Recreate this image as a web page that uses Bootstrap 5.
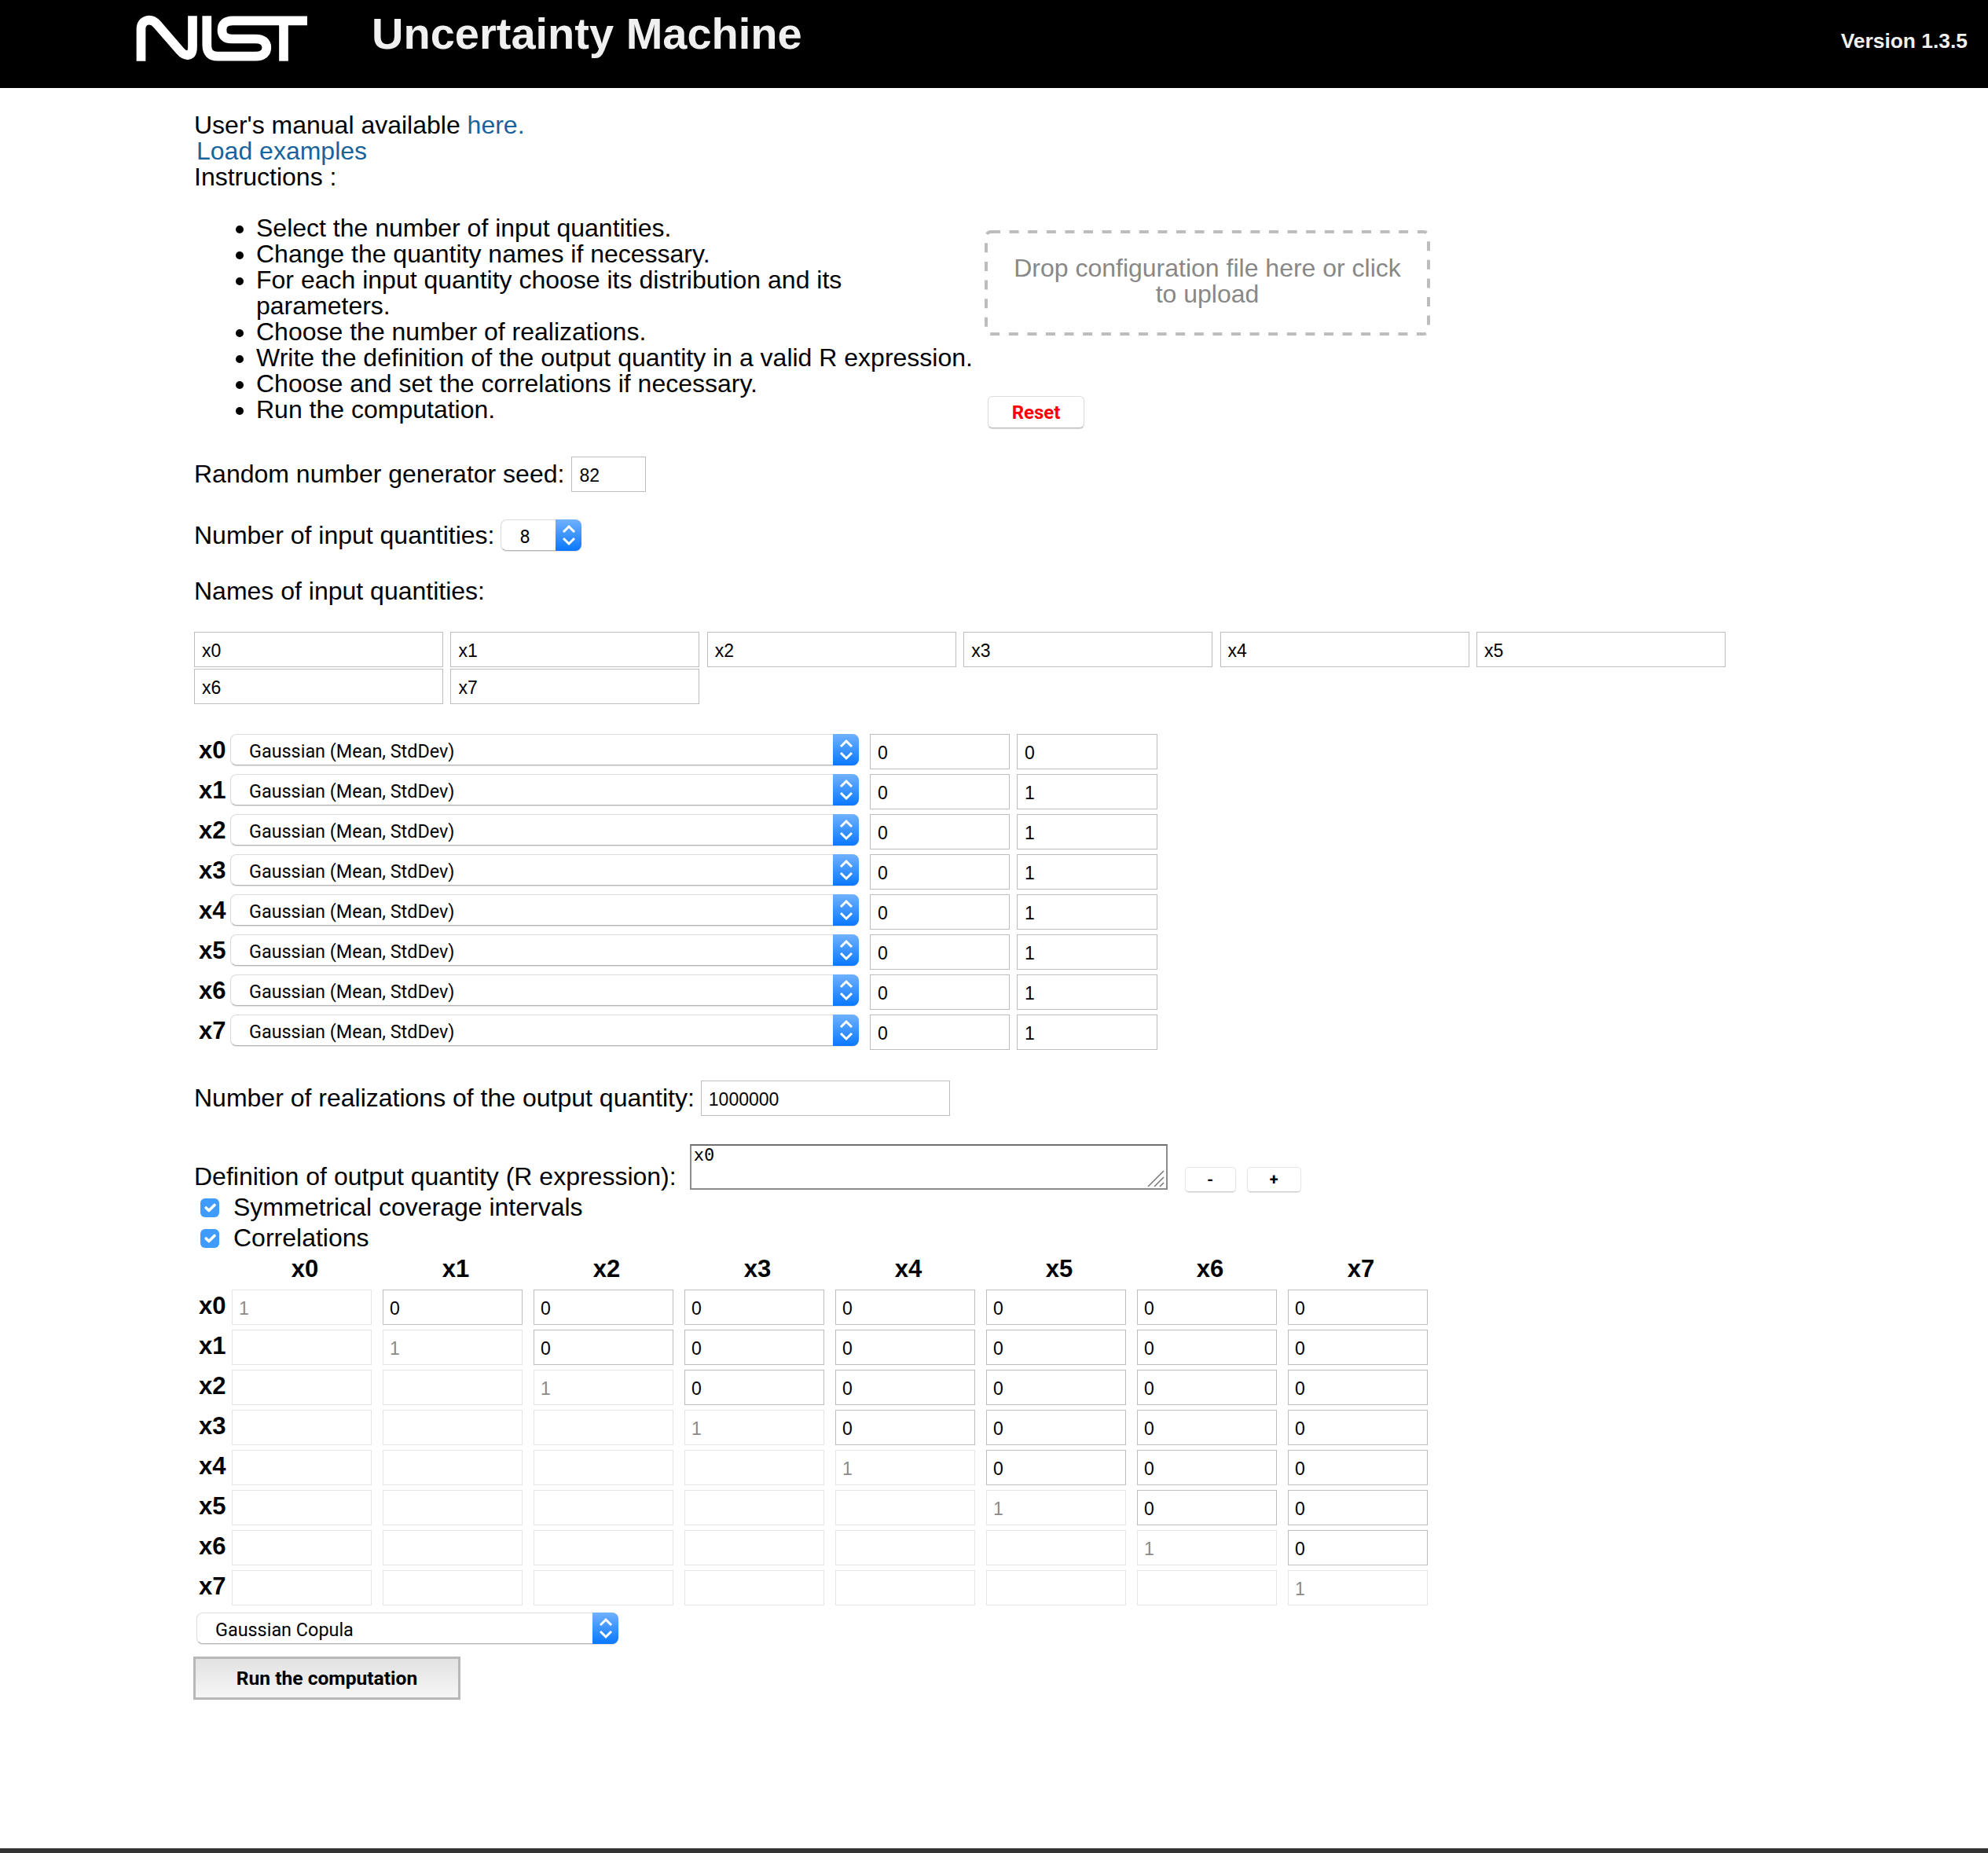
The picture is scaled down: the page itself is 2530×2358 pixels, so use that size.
<!DOCTYPE html>
<html lang="en">
<head>
    <meta charset="UTF-8">
    <meta name="viewport" content="width=device-width, initial-scale=1.0">
    <title>Uncertainty Machine</title>
    <link href="https://cdn.jsdelivr.net/npm/bootstrap@5.3.0/dist/css/bootstrap.min.css" rel="stylesheet">
    <style>
        body { font-family: "Liberation Sans", Arial, sans-serif; font-size: 32px; line-height: 33px; color: #000; min-height: 100vh; }
        a { color: #19639c; text-decoration: none; }

        .top-bar { height: 112px; background: #000; color: #f0f0f0; padding-left: 165px; padding-right: 26px; }
        .top-logo { margin-top: 12px; }
        .top-title { font-size: 56px; line-height: 64px; font-weight: 700; margin: 11px 0 0 73px; }
        .top-version { font-size: 26.4px; line-height: 30px; font-weight: 700; margin-top: 37px; }

        .page-body { padding: 31px 0 0 247px; }
        .load-link { margin-left: 3px; }
        .steps { width: 1006px; margin: 32px 0 0; padding: 0 12px 0 79px; }
        .drop-area { position: relative; width: 567px; height: 134px; margin-top: 51px; padding: 0 29px 4px; color: #888; text-align: center; }
        .drop-dash { position: absolute; top: 0; left: 0; }
        .reset-btn { width: 123px; height: 41px; margin: 77px 0 0 4px; padding: 0; background: #fff; border: 1px solid #ddd; border-bottom-color: #bbb; border-radius: 6px; box-shadow: 0 1px 1px rgba(0,0,0,.15); color: #f00; font: 700 24px Roboto, sans-serif; }

        .form-control.num-box { height: 45px; padding: 3px 9px 0; border: 1px solid #bdbdbd; border-radius: 0; font-size: 23px; line-height: 1; color: #000; background: #fff; box-shadow: none; }
        .form-control.num-box:disabled { border-color: #e4e4e4; color: #8a8a8a; background: #fff; }
        .seed-box { width: 95px; margin-left: 1px; }
        .real-box { width: 317px; }
        .mean-box { width: 179px; margin-left: 9px; }
        .mac-select + .mean-box { width: 178px; margin-left: 14px; }
        .names-grid { display: grid; grid-template-columns: repeat(6, 317px); gap: 2px 9.4px; margin-top: 35px; }

        .mac-select { position: relative; height: 40px; flex: none; }
        .mac-select .form-select { height: 40px; padding: 3px 40px 0 23px; background-image: none; border: 1px solid #dcdcdc; border-bottom-color: #b5b5b5; border-radius: 8px; font: 400 23.4px Roboto, sans-serif; color: #000; box-shadow: 0 1px 1px rgba(0,0,0,.12); }
        .select-cap { position: absolute; top: 0; right: 0; bottom: 0; width: 33px; display: flex; align-items: center; justify-content: center; background: linear-gradient(#6fb1ff, #0a78ff); border-radius: 0 8px 8px 0; pointer-events: none; }
        .count-select { width: 103px; }
        .dist-select { width: 800px; }
        .copula-select { width: 537px; margin: 9px 0 0 3px; }

        .seed-line { margin-top: 36px; }
        .form-gap { margin-top: 35px; }
        .dist-rows { margin-top: 38px; gap: 6px; }
        .var-label { width: 46px; padding-left: 6px; flex: none; font-size: 31px; line-height: 42px; font-weight: 700; }
        .real-line { margin-top: 39px; }
        .def-line { height: 61px; margin-top: 36px; }
        .def-label { margin-bottom: 3px; }
        .out-area { width: 608px; height: 58px; padding: 0 3px; border: 2px solid #8c8c8c; border-top-color: #6f6f6f; border-radius: 0; font: 22px/24px "DejaVu Sans Mono", monospace; color: #000; }
        .area-wrap { position: relative; margin-left: 17px; }
        .area-grip { position: absolute; right: 3px; bottom: 3px; background: #fff; pointer-events: none; }
        .step-btn { height: 32px; padding: 0; background: #fff; border: 1px solid #e6e6e6; border-bottom-color: #ccc; border-radius: 5px; box-shadow: 0 1px 1px rgba(0,0,0,.1); font: 700 20px Roboto, sans-serif; color: #000; }
        .minus-btn { width: 65px; margin-left: 22px; }
        .plus-btn { width: 69px; margin-left: 14px; }

        .check-line { height: 39px; }
        .form-check-input.mac-check { width: 24px; height: 24px; margin: 0 18px 0 8px; border: 0; border-radius: 6px; background-color: #3f9bfc; }
        .head-row { height: 33px; margin-top: 3px; padding-left: 48px; gap: 14px; }
        .head-cell { width: 178px; padding-left: 8px; text-align: center; font-size: 31px; font-weight: 700; }
        .corr-rows { margin-top: 10px; gap: 6px; }
        .corr-label { width: 48px; }
        .corr-cells { gap: 14px; }
        .corr-cells .num-box { width: 178px; margin: 0; padding-left: 8px; flex: none; }

        .run-btn { width: 340px; height: 55px; margin: 16px 0 0 -1px; padding: 0; background: linear-gradient(#e2e2e2, #f6f6f6); border: 3px solid #b8b8b8; border-radius: 0; font: 700 24.6px Roboto, sans-serif; color: #000; }
        .foot-strip { height: 6px; background: #333; }
    </style>
</head>
<body class="d-flex flex-column">
    <header class="top-bar d-flex align-items-start">
        <svg class="top-logo" width="235" height="75" viewBox="0 0 235 75" fill="none" stroke="#fff" stroke-width="11.7">
            <path d="M14.5 65.7V25C14.5 13 27 10 35 19L64 52.5C71 60.5 80 60.5 80 48V8.3"/>
            <path d="M98.3 8.3V45C98.3 55 103 59.7 112 59.7H160C170 59.7 174.3 55 174.3 48.5C174.3 42 170 37.5 160 37.5H130C121 37.5 117.5 33 117.5 26C117.5 18.5 122 14.3 131 14.3H226"/>
            <path d="M196 14.3V65.7"/>
        </svg>
        <div class="top-title">Uncertainty Machine</div>
        <div class="top-version ms-auto">Version 1.3.5</div>
    </header>

    <main class="page-body">
        <div>User's manual available <a href="#">here.</a></div>
        <div class="load-link"><a href="#">Load examples</a></div>
        <div>Instructions :</div>

        <div class="d-flex">
            <ul class="steps">
                <li>Select the number of input quantities.</li>
                <li>Change the quantity names if necessary.</li>
                <li>For each input quantity choose its distribution and its parameters.</li>
                <li>Choose the number of realizations.</li>
                <li>Write the definition of the output quantity in a valid R expression.</li>
                <li>Choose and set the correlations if necessary.</li>
                <li>Run the computation.</li>
            </ul>
            <div>
                <div class="drop-area d-flex align-items-center justify-content-center">
                    <svg class="drop-dash" width="567" height="134" fill="none" stroke="#bdbdbd" stroke-width="4" stroke-dasharray="12 11.6"><rect x="2" y="2" width="563" height="130" rx="6"/></svg>
                    Drop configuration file here or click to upload
                </div>
                <button type="button" class="btn reset-btn">Reset</button>
            </div>
        </div>

        <div class="seed-line d-flex align-items-center">
            <label class="me-2">Random number generator seed:</label>
            <input class="form-control num-box seed-box" value="82">
        </div>

        <div class="form-gap d-flex align-items-center">
            <label class="me-2">Number of input quantities:</label>
            <div class="mac-select count-select" data-cap>
                <select class="form-select"><option>8</option></select>
            </div>
        </div>

        <div class="form-gap">Names of input quantities:</div>
        <div class="names-grid" id="nameInputs"></div>

        <div class="dist-rows d-flex flex-column" id="distRows"></div>

        <div class="real-line d-flex align-items-center">
            <label class="me-2">Number of realizations of the output quantity:</label>
            <input class="form-control num-box real-box" value="1000000">
        </div>

        <div class="def-line d-flex align-items-end">
            <label class="def-label">Definition of output quantity (R expression):</label>
            <div class="area-wrap align-self-start">
                <textarea class="d-block out-area">x0</textarea>
                <svg class="area-grip" width="24" height="24" viewBox="0 0 24 24" stroke="#777" stroke-width="1.5"><path d="M2 23 22 3M10 23 22 11M17 23 22 18"/></svg>
            </div>
            <button type="button" class="btn step-btn minus-btn">-</button>
            <button type="button" class="btn step-btn plus-btn">+</button>
        </div>

        <div class="check-line d-flex align-items-center">
            <input type="checkbox" class="form-check-input mac-check" checked><span>Symmetrical coverage intervals</span>
        </div>
        <div class="check-line d-flex align-items-center">
            <input type="checkbox" class="form-check-input mac-check" checked><span>Correlations</span>
        </div>

        <div class="head-row d-flex" id="corrHead"></div>
        <div class="corr-rows d-flex flex-column" id="corrRows"></div>

        <div class="mac-select copula-select" data-cap>
            <select class="form-select"><option>Gaussian Copula</option></select>
        </div>
        <button type="button" class="btn run-btn d-block">Run the computation</button>
    </main>

    <div class="foot-strip mt-auto"></div>

    <script>
        const names = ['x0', 'x1', 'x2', 'x3', 'x4', 'x5', 'x6', 'x7'];

        document.getElementById('nameInputs').innerHTML = names
            .map(n => `<input class="form-control num-box" value="${n}">`).join('');

        document.getElementById('distRows').innerHTML = names.map((n, i) => `
            <div class="d-flex align-items-start">
                <div class="var-label">${n}</div>
                <div class="mac-select dist-select" data-cap>
                    <select class="form-select"><option>Gaussian (Mean, StdDev)</option></select>
                </div>
                <input class="form-control num-box mean-box" value="0">
                <input class="form-control num-box mean-box" value="${i === 0 ? 0 : 1}">
            </div>`).join('');

        document.getElementById('corrHead').innerHTML = names
            .map(n => `<div class="head-cell">${n}</div>`).join('');

        // upper triangle editable, diagonal fixed at 1, lower triangle blank
        document.getElementById('corrRows').innerHTML = names.map((n, r) => {
            const cells = names.map((m, c) => {
                if (c > r) return '<input class="form-control num-box" value="0">';
                return `<input class="form-control num-box" disabled value="${c === r ? 1 : ''}">`;
            }).join('');
            return `<div class="d-flex align-items-start">
                <div class="var-label corr-label">${n}</div>
                <div class="corr-cells d-flex">${cells}</div>
            </div>`;
        }).join('');

        // blue up/down cap of the mac select
        document.querySelectorAll('[data-cap]').forEach(el => {
            el.insertAdjacentHTML('beforeend', `<span class="select-cap">
                <svg width="20" height="30" viewBox="0 0 20 30" fill="none" stroke="#fff" stroke-width="3"><path d="M3 11 10 4 17 11M3 19 10 26 17 19"/></svg>
            </span>`);
        });
    </script>
    <script src="https://cdn.jsdelivr.net/npm/bootstrap@5.3.0/dist/js/bootstrap.bundle.min.js"></script>
</body>
</html>
